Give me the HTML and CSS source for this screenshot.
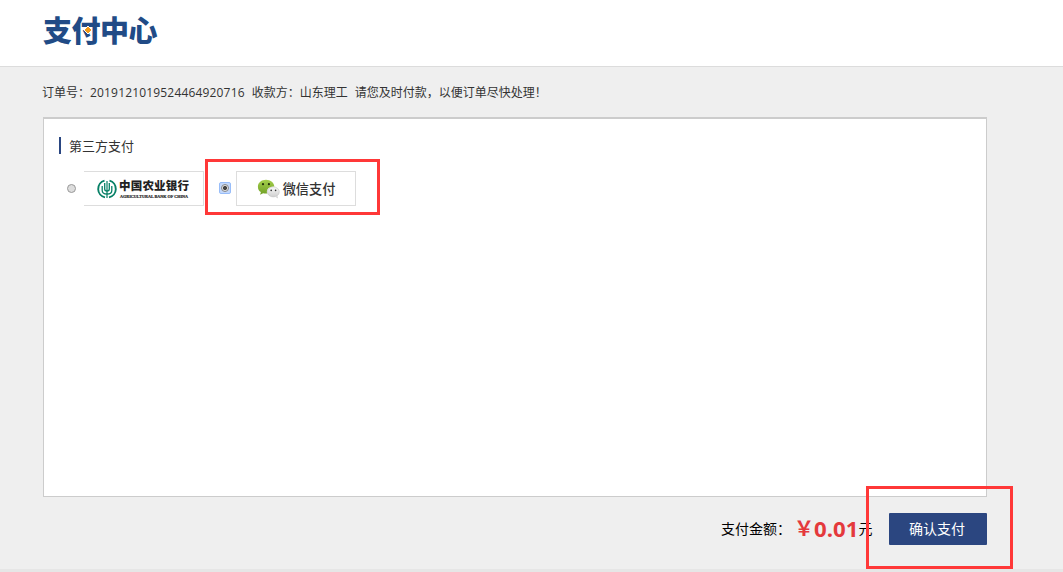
FILE: index.html
```html
<!DOCTYPE html>
<html lang="zh-CN">
<head>
    <meta charset="UTF-8">
    <title>支付中心</title>
    <link rel="stylesheet" href="styles.css">
</head>
<body>
    <div class="header">
        <h1 class="logo">支付中心
            <svg class="logo-dot" width="10" height="10" viewBox="0 0 10 10"><path d="M5 1l4 4-4 4-4-4z" fill="#f09a1a" stroke="#fff"/></svg>
        </h1>
    </div>

    <div class="main">
        <p class="order"><span>订单号：<span class="num">2019121019524464920716</span></span><span>收款方：山东理工</span><span>请您及时付款，以便订单尽快处理！</span></p>

        <div class="panel">
            <h2 class="title">第三方支付</h2>
            <div class="banks">
                <label class="bank">
                    <input type="radio" name="bank" class="radio">
                    <span class="card abc">
                        <svg width="20" height="20" viewBox="0 0 20 20" fill="none" stroke="#078066">
                            <path d="M7.5 1.7A8.6 8.6 0 0 0 8 18.4M12.5 1.7A8.6 8.6 0 0 1 12 18.4" stroke-width="1.9"/>
                            <path d="M10 2v17" stroke-width="1.2"/>
                            <path d="M7.700 4v6c0 1.500.8 2 2.300 2s2.300-.5 2.300-2V4M5.200 7v4.500c0 2.500 1.500 3.500 4.800 3.500s4.800-1 4.800-3.500V7" stroke-width="1.3"/>
                        </svg>
                        <svg class="abc-name" width="72" height="30" viewBox="0 0 72 30">
                            <text class="abc-cn" x="0" y="16" textLength="70">中国农业银行</text>
                            <text class="abc-en" x="1" y="23.5" textLength="68" lengthAdjust="spacingAndGlyphs">AGRICULTURAL BANK OF CHINA</text>
                        </svg>
                    </span>
                </label>
                <label class="bank wechat">
                    <span class="focus"><input type="radio" name="bank" class="radio" checked></span>
                    <span class="card">
                        <svg width="23" height="20" viewBox="0 0 23 20">
                            <defs>
                                <linearGradient id="green" x2="0" y2="1"><stop stop-color="#a5cf4d"/><stop offset="1" stop-color="#6f9f24"/></linearGradient>
                                <linearGradient id="grey" x2="0" y2="1"><stop stop-color="#fafafa"/><stop offset="1" stop-color="#cfcfcf"/></linearGradient>
                            </defs>
                            <path d="M9 .8C4.500.8.900 3.600.900 7.700c0 2.400 1.100 4.200 3 5.400L3.100 15.800l3-1.600c1 .3 1.900.4 2.900.4 4.600 0 8.300-3 8.300-6.900S13.600.8 9 .8z" fill="url(#green)"/>
                            <path d="M18 17l2.700 2.600-.5-3.500z" fill="#bbb"/>
                            <ellipse cx="16.3" cy="12.9" rx="6.5" ry="5.5" fill="#fff"/>
                            <ellipse cx="16.3" cy="12.9" rx="6" ry="5" fill="url(#grey)" stroke="#bbb" stroke-width=".5"/>
                            <circle cx="6" cy="5.200" r="1.1" fill="#24330b"/><circle cx="11.9" cy="5.2" r="1.1" fill="#24330b"/>
                            <circle cx="14.2" cy="11.4" r=".8" fill="#333"/><circle cx="18.6" cy="11.4" r=".8" fill="#333"/>
                        </svg>
                        <b>微信支付</b>
                    </span>
                </label>
                <i class="mark mark-bank"></i>
            </div>
        </div>

        <div class="pay">
            <span>支付金额：</span>
            <span class="yen">￥</span>
            <span class="money">0.01</span>
            <span>元</span>
            <button type="button" class="btn">确认支付</button>
            <i class="mark mark-btn"></i>
        </div>
    </div>
    <div class="footer"></div>
</body>
</html>
```
FILE: styles.css
```css
* {
    box-sizing: border-box;
    margin: 0;
    padding: 0;
}
body {
    height: 572px;
    overflow: hidden;
    background: #efefef;
    color: #333;
    font: 12px/18px "Open Sans", "Noto Sans CJK SC", sans-serif;
}
.header {
    height: 67px;
    padding: 9px 43px 0;
    background: #fff;
    border-bottom: 1px solid #dcdcdc;
}
.logo {
    position: relative;
    width: 116px;
    height: 40px;
    color: #214b86;
    font: 900 29px/40px "Noto Sans CJK SC", sans-serif;
    letter-spacing: -0.5px;
    white-space: nowrap;
}
.logo-dot {
    position: absolute;
    left: 40px;
    top: 16px;
}
.main {
    width: 944px;
    height: 502px;
    margin-left: 43px;
}
.order {
    display: flex;
    gap: 7px;
    height: 50px;
    margin-left: -1px;
    padding-top: 17px;
}
.num {
    letter-spacing: 0.17px;
}
.panel {
    height: 380px;
    padding: 18px 15px;
    background: #fff;
    border: 1px solid #ccc;
    border-top-width: 2px;
}
.title {
    height: 17px;
    padding-left: 8px;
    border-left: 2px solid #2a4681;
    font-size: 13px;
    font-weight: normal;
    line-height: 18px;
}
.banks {
    position: relative;
    display: flex;
    margin-top: 17px;
    padding-left: 8px;
}
.bank {
    display: flex;
    align-items: center;
}
.radio {
    appearance: none;
    width: 9px;
    height: 9px;
    margin-right: 8px;
    border: 1px solid #999;
    border-radius: 50%;
    background: #ddd;
}
.radio:checked {
    display: block;
    width: 8px;
    height: 8px;
    margin: 0;
    border-color: #888;
    background: radial-gradient(#444 0 1.6px, #e4e4e4 2.4px);
}
.focus {
    margin: 0 5px 1px 0;
    padding: 1px;
    border: 1px solid #98bdf9;
    border-radius: 2px;
    background: #c3d8fb;
}
.wechat {
    margin-left: 15px;
}
.card {
    display: flex;
    align-items: center;
    justify-content: center;
    width: 120px;
    height: 35px;
    border: 1px solid #ddd;
    background: #fff;
}
.abc {
    border-left: 0;
}
.abc-name {
    margin-left: 2px;
    overflow: visible;
}
.abc-cn {
    fill: #222;
    font: 900 11.5px "Liberation Serif", "Noto Sans CJK SC", serif;
}
.abc-en {
    fill: #222;
    stroke: #222;
    stroke-width: 0.2px;
    font: bold 4.6px "Liberation Serif", serif;
}
.card b {
    margin-left: 3px;
    font-size: 13.2px;
    font-weight: 500;
}
.pay {
    position: relative;
    display: flex;
    align-items: center;
    height: 64px;
    padding-left: 678px;
    color: #000;
    font-size: 14px;
    white-space: nowrap;
}
.yen,
.money {
    color: #e4393c;
    font-size: 22.2px;
    font-weight: bold;
    line-height: 30px;
}
.yen {
    width: 23px;
    padding-left: 3px;
    font-size: 20px;
}
.btn {
    width: 98px;
    height: 32px;
    margin-left: auto;
    padding: 0 2px 2px 0;
    border: 0;
    border-radius: 1px;
    background: #2b4680;
    color: #fff;
    font: 14px "Noto Sans CJK SC", sans-serif;
}
.mark {
    position: absolute;
    border: 3px solid #ff3838;
}
.mark-bank {
    left: 146px;
    top: -12px;
    width: 175px;
    height: 56px;
}
.mark-btn {
    left: 823px;
    top: -11px;
    width: 147px;
    height: 83px;
}
.footer {
    height: 3px;
    background: #e6e6e6;
}
```
